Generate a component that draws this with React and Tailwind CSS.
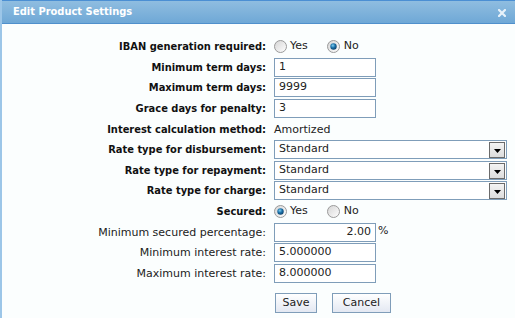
import React from "react";

const font = { fontFamily: '"DejaVu Sans", Verdana, sans-serif' };
const boldFont = { fontFamily: '"DejaVu Sans Condensed", "DejaVu Sans", Verdana, sans-serif', fontStretch: "condensed" };

function Radio({ checked }) {
  return (
    <svg width="13" height="13" viewBox="0 0 13 13" className="shrink-0">
      <defs>
        <linearGradient id="rg" x1="0" y1="0" x2="1" y2="1">
          <stop offset="0" stopColor="#d4d4d4" />
          <stop offset="1" stopColor="#ffffff" />
        </linearGradient>
        <radialGradient id="dot" cx="0.4" cy="0.35" r="0.7">
          <stop offset="0" stopColor="#7fd0f0" />
          <stop offset="0.5" stopColor="#1a6fa8" />
          <stop offset="1" stopColor="#0b3f66" />
        </radialGradient>
      </defs>
      <circle cx="6.5" cy="6.5" r="6" fill="url(#rg)" stroke="#9a9a9a" strokeWidth="1" />
      {checked && <circle cx="6.5" cy="6.5" r="3.2" fill="url(#dot)" />}
    </svg>
  );
}

function Dropdown() {
  return (
    <div className="flex items-center h-[19px] w-[233px] border border-[#7f9db9] bg-white pl-[4px] pr-[1px] text-[11px] text-[#222]">
      <span className="flex-1">Standard</span>
      <span className="flex items-end justify-center w-[16px] h-[16px] border border-[#6b6b6b] bg-gradient-to-b from-[#f4f4f4] to-[#dcdcdc] pb-[4px]">
        <svg width="7" height="4" viewBox="0 0 7 4">
          <polygon points="0,0 7,0 3.5,4" fill="#000" />
        </svg>
      </span>
    </div>
  );
}

function TextInput({ value, right, w = "w-[102px]" }) {
  return (
    <div
      className={`flex items-center h-[19px] ${w} border border-[#7f9db9] bg-white px-[4px] text-[11px] text-[#222] ${
        right ? "justify-end" : ""
      }`}
    >
      {value}
    </div>
  );
}

function Row({ h, label, bold = true, children }) {
  return (
    <div className={`flex ${h}`}>
      <div
        className={`w-[266px] shrink-0 text-right text-[11px] leading-[19px] ${
          bold ? "font-bold text-[#111]" : "text-[#222]"
        }`}
        style={bold ? boldFont : undefined}
      >
        {label}
      </div>
      <div className="ml-[8px] flex items-start">{children}</div>
    </div>
  );
}

export default function App() {
  return (
    <div className="w-[515px] h-[318px] bg-[#fbfefe] overflow-hidden border-l-2 border-[#9cc6e8]" style={font}>
      <div className="h-[24px] -ml-[2px] flex items-center justify-between border-t border-l border-[#4b8fd3] border-b border-b-[#4f90cc] bg-gradient-to-b from-[#8fbde0] to-[#6fa8d6] pl-[12px] pr-[8px]">
        <span className="text-white font-bold text-[11px]" style={boldFont}>Edit Product Settings</span>
        <svg width="8" height="8" viewBox="0 0 8 8" className="mr-[1px] mt-[1px]">
          <path d="M1 1 L7 7 M7 1 L1 7" stroke="#e8f2fa" strokeWidth="2.2" strokeLinecap="square" />
        </svg>
      </div>
      <div className="pt-[13px] -ml-[2px]">
        <Row h="h-[21px]" label="IBAN generation required:">
          <div className="flex items-center h-[19px] text-[11px] text-[#222]">
            <Radio />
            <span className="ml-[3px]">Yes</span>
            <span className="ml-[19px]"><Radio checked /></span>
            <span className="ml-[4px]">No</span>
          </div>
        </Row>
        <Row h="h-[20px]" label="Minimum term days:"><TextInput value="1" /></Row>
        <Row h="h-[21px]" label="Maximum term days:"><TextInput value="9999" /></Row>
        <Row h="h-[21px]" label="Grace days for penalty:"><TextInput value="3" /></Row>
        <Row h="h-[20px]" label="Interest calculation method:">
          <span className="text-[11px] leading-[19px] text-[#222]">Amortized</span>
        </Row>
        <Row h="h-[21px]" label="Rate type for disbursement:"><Dropdown /></Row>
        <Row h="h-[20px]" label="Rate type for repayment:"><Dropdown /></Row>
        <Row h="h-[21px]" label="Rate type for charge:"><Dropdown /></Row>
        <Row h="h-[21px]" label="Secured:">
          <div className="flex items-center h-[19px] text-[11px] text-[#222]">
            <Radio checked />
            <span className="ml-[3px]">Yes</span>
            <span className="ml-[19px]"><Radio /></span>
            <span className="ml-[4px]">No</span>
          </div>
        </Row>
        <Row h="h-[20px]" bold={false} label="Minimum secured percentage:">
          <TextInput value="2.00" right />
          <span className="ml-[2px] text-[11px] leading-[15px] text-[#222]">%</span>
        </Row>
        <Row h="h-[21px]" bold={false} label="Minimum interest rate:"><TextInput value="5.000000" /></Row>
        <Row h="h-[21px]" bold={false} label="Maximum interest rate:"><TextInput value="8.000000" /></Row>
        <div className="flex mt-[8px] ml-[275px] gap-[15px]">
          <button className="h-[20px] w-[42px] border border-[#7f9db9] bg-gradient-to-b from-[#ffffff] to-[#e3e8f2] text-[11px] text-[#222]">Save</button>
          <button className="h-[20px] w-[59px] border border-[#7f9db9] bg-gradient-to-b from-[#ffffff] to-[#e3e8f2] text-[11px] text-[#222]">Cancel</button>
        </div>
      </div>
    </div>
  );
}
